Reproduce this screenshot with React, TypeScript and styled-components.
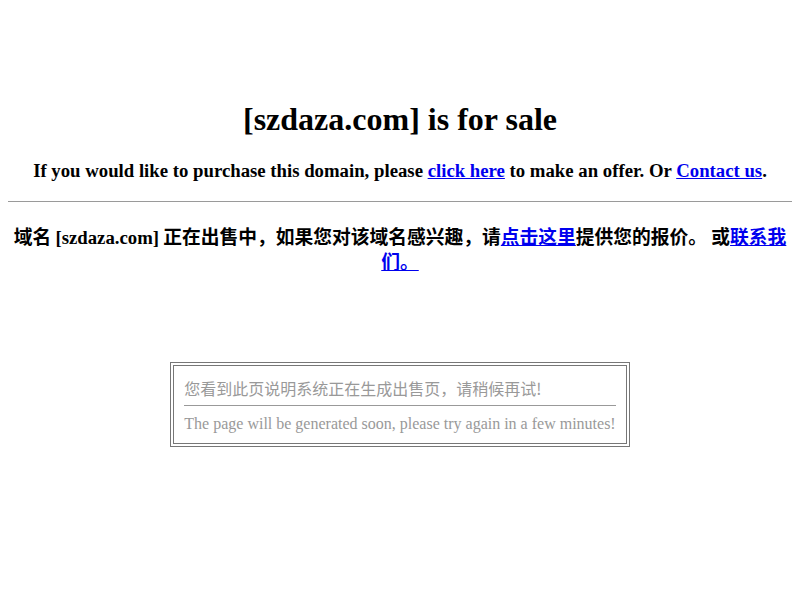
import { styled, createGlobalStyle } from "styled-components"

const GlobalStyle = createGlobalStyle`
body {
    margin: 8px;
    background: #fff;
    font-family: "Liberation Serif", "Noto Sans CJK SC", serif;
    color: #000;
}
`

export default function App() {
    return (
        <>
            <GlobalStyle />
            <Page>
                <Title>[szdaza.com] is for sale</Title>
                <Offer>
                    If you would like to purchase this domain, please <a href="#">click here</a> to make an offer. Or <a href="#">Contact us</a>.
                </Offer>
                <Rule />
                <OfferCn>
                    域名 <Domain>[szdaza.com]</Domain> 正在出售中，如果您对该域名感兴趣，请<a href="#">点击这里</a>提供您的报价。 或<a href="#">联系我们。</a>
                </OfferCn>
                <NoticeBox>
                    <NoticeInner>
                        <NoticeCn>您看到此页说明系统正在生成出售页，请稍候再试!</NoticeCn>
                        <NoticeRule />
                        <NoticeEn>The page will be generated soon, please try again in a few minutes!</NoticeEn>
                    </NoticeInner>
                </NoticeBox>
            </Page>
        </>
    )
}

const Page = styled.div`
display: flex;
flex-direction: column;
align-items: center;
padding-top: 93px;
text-align: center;
a {
    color: #0000ee;
    text-decoration: underline;
}
`
const Title = styled.h1`
font-size: 32px;
font-weight: 700;
margin: 0;
`
const Offer = styled.div`
font-size: 18.75px;
font-weight: 700;
margin-top: 22px;
`
const Rule = styled.hr`
align-self: stretch;
margin: 19px 0 0;
border: none;
border-top: 1px solid #9a9a9a;
height: 0;
`
const OfferCn = styled.div`
font-family: "Noto Sans CJK SC", sans-serif;
font-size: 18.75px;
font-weight: 700;
line-height: 25px;
margin-top: 21px;
padding: 0 4px;
`
const Domain = styled.span`
font-family: "Liberation Serif", serif;
line-height: 1;
`
const NoticeBox = styled.div`
margin-top: 89px;
border: 1px solid #777;
padding: 2px;
`
const NoticeInner = styled.div`
border: 1px solid #777;
padding: 10px 10px 9px 10px;
display: flex;
flex-direction: column;
align-items: stretch;
text-align: left;
color: #999;
`
const NoticeCn = styled.div`
font-family: "Noto Sans CJK SC", sans-serif;
font-size: 16px;
line-height: 24px;
`
const NoticeRule = styled.div`
border-top: 1px solid #999;
margin: 5px 0 8px;
`
const NoticeEn = styled.div`
font-size: 16px;
line-height: 20px;
`
